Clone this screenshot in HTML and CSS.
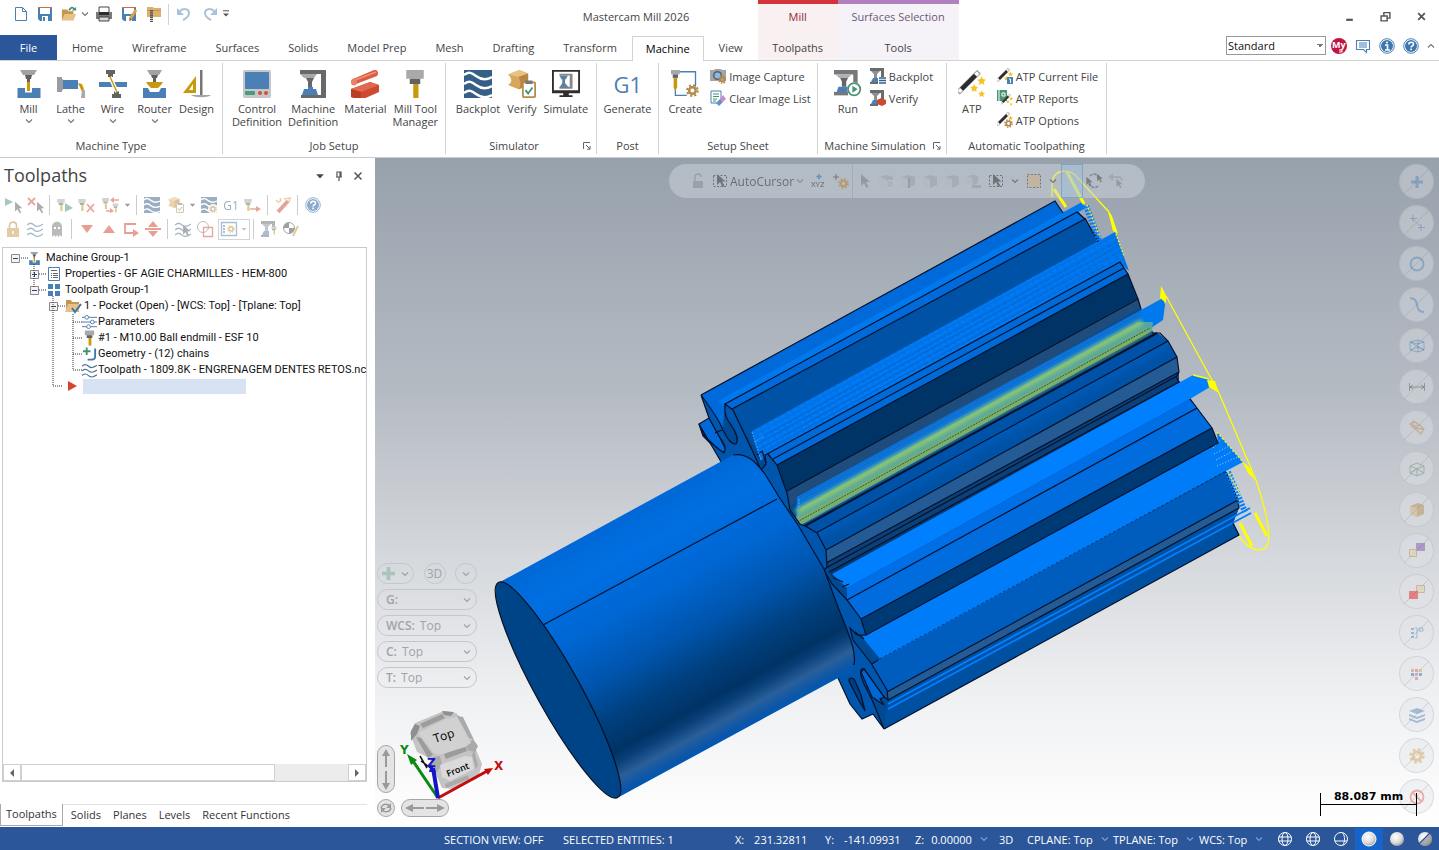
FILE: index.html
```html
<!DOCTYPE html>
<html lang="en">
<head>
    <meta charset="utf-8">
    <title>Mastercam Mill 2026</title>
    <link rel="stylesheet" href="styles.css">
</head>
<body>

<!-- shared icons -->
<svg class="sprite" aria-hidden="true">
    <symbol id="chev" viewBox="0 0 8 8"><path d="M1 2.500l3 3 3-3" fill="none" stroke="currentColor" stroke-width="1.200"/></symbol>
    <symbol id="tri" viewBox="0 0 8 8"><path d="M1 2.500h6L4 6z" fill="currentColor"/></symbol>
    <symbol id="cursor" viewBox="0 0 16 16"><path d="M5 1v12l3-3 2.500 5 2-1-2.500-5h4z" fill="#5c5c5c"/></symbol>
    <symbol id="cursor-box" viewBox="0 0 16 16"><path d="M1.500 2.500h13v11h-13z" fill="none" stroke="#4d4d4d" stroke-dasharray="2 1.500"/><path d="M5 1v11l3-3 2.500 5 2-1-2.500-4.500h3.500z" fill="#4d4d4d"/></symbol>
    <symbol id="tool" viewBox="0 0 16 16"><path d="M3 0h10v5H3z" fill="#a9a9ab"/><path d="M5 5h6v3H5z" fill="#626262"/><path d="M7 8h3v8H7z" fill="#c59a10"/></symbol>
    <symbol id="mill" viewBox="0 0 28 28"><path d="M5 0h17l-3 5H8z" fill="#a2a2a4"/><path d="M10 5h7l-1 4h-1v4h-3V9h-1z" fill="#606060"/><path d="M2.500 18H10v4.500h7V18h8.500v10h-23z" fill="#4a80b5"/><path d="M12 12h3v9h-3z" fill="#c9990c"/></symbol>
    <symbol id="lathe" viewBox="0 0 28 28"><path d="M0 7h5v2h1v11H5v2H0z" fill="#9c9ca0"/><path d="M6 10h15v9H6z" fill="#4a80b5"/><path d="M21 13l4 1 2 5-2 3z" fill="#c9990c"/><path d="M25 20h3v8h-4z" fill="#a9a9ab"/></symbol>
    <symbol id="wire" viewBox="0 0 28 28"><path d="M7 0h9v4h-2v3H9V4H7zM13 28v-4h2v-3h5v3h2v4z" fill="#626262"/><path d="M0 12h28v5H0z" fill="#4a80b5"/><path d="M11 7l7 15" stroke="#fff" stroke-width="4"/><path d="M11 7l7 15" stroke="#c9990c" stroke-width="1.500"/></symbol>
    <symbol id="router" viewBox="0 0 28 28"><path d="M6 0h15l-3 5H9z" fill="#a2a2a4"/><path d="M10 5h7l-1 3h-1v4h-3V8h-1z" fill="#606060"/><path d="M5 12h17l-2 3-3 3h-7l-3-3z" fill="#c9990c"/><path d="M2 18h5l2 4h9l2-4h5v10H2z" fill="#4a80b5"/></symbol>
    <symbol id="design" viewBox="0 0 28 28"><path d="M0 23L13 6v17zm6-3h4v-6z" fill="#c9990c" fill-rule="evenodd"/><path d="M17 0h2.500v25H17z" fill="#777"/><path d="M8 25h20c-3 3-16 3-20 0z" fill="#a2a5a8"/></symbol>
    <symbol id="control" viewBox="0 0 28 28"><rect width="28" height="28" rx="2" fill="#c6c7ca"/><rect x="2" y="2" width="24" height="17" rx="1" fill="#4a80b5"/><rect x="2" y="21" width="10" height="4" rx="1" fill="#4a9b7d"/><circle cx="17" cy="23" r="2" fill="#d2503a"/><circle cx="23" cy="23" r="2" fill="#d2503a"/></symbol>
    <symbol id="machine" viewBox="0 0 28 28"><path d="M1 0h26v29H2v-4h20V4H1z" fill="#69696b"/><path d="M1 4h17l-3 4H5z" fill="#aaaaac"/><path d="M7 8h8l-2 4v5H9v-5z" fill="#666"/><path d="M5 19h4v-2h5v2h3l2 6H3z" fill="#4a80b5"/></symbol>
    <symbol id="material" viewBox="0 0 28 28"><path d="M2 9L23 0c4-1 5 4 3 6L5 14c-5 2-6-3-3-5z" fill="#d85e43"/><path d="M4 10l21-8" stroke="#f19479" stroke-width="1.500"/><ellipse cx="3" cy="12" rx="3" ry="3.500" fill="#e8816a"/><path d="M0 19l19-7 9 3v7L10 30l-10-3z" fill="#cc4a30"/><path d="M0 19l19-7 9 3-18 7z" fill="#e2694d"/><path d="M0 19l10 3v8L0 27z" fill="#b93e26"/></symbol>
    <symbol id="waves" viewBox="0 0 28 28"><path d="M0 0h28v28H0z" fill="#365f87"/><path d="M0 5c5-4 8-2 12 1s9 5 16 1M0 14c5-4 8-2 12 1s9 5 16 1M0 23c5-4 8-2 12 1s9 5 16 1" fill="none" stroke="#fff" stroke-width="2.500"/></symbol>
    <symbol id="verify" viewBox="0 0 32 32"><path d="M0 5l13-5 10 4v14l-11 4L0 17c5-3 5-7 0-12z" fill="#d9a75c"/><path d="M0 5l13-5 10 4-11 4z" fill="#e9c182"/><path d="M12 8l11-4v14l-11 4c3-4 3-9 0-14z" fill="#b98545"/><rect x="17" y="14" width="14" height="17" rx="1" fill="#fff" stroke="#b58a49" stroke-width="2"/><path d="M20 12h8v4h-8z" fill="#777"/><path d="M20 23l3 4 5-7" fill="none" stroke="#3f9373" stroke-width="2"/></symbol>
    <symbol id="simulate" viewBox="0 0 30 30"><path d="M1 1h28v22H1z" fill="#fff" stroke="#2f2d30" stroke-width="2"/><path d="M0 22h30v3H0zM12 25h6v2h4v2H8v-2h4z" fill="#2f2d30"/><path d="M8 4h14v16H8v-2h11V6H8z" fill="#888"/><path d="M8 6h9l-2 4h-1v4l4 5H8l3-5v-4h-1z" fill="#60809f"/></symbol>
    <symbol id="gear" viewBox="0 0 16 16"><circle cx="8" cy="8" r="4" fill="none" stroke="currentColor" stroke-width="3"/><circle cx="8" cy="8" r="6.500" fill="none" stroke="currentColor" stroke-width="2.500" stroke-dasharray="2.700 2.400"/></symbol>
    <symbol id="create" viewBox="0 0 32 32"><path d="M6 2h22v17M5 20v9h13" fill="none" stroke="#4a80b5" stroke-width="1.500"/><path d="M0 0h10v5H0z" fill="#a9a9ab"/><path d="M2 5h6v4H2z" fill="#626262"/><path d="M3 9h4v11l-2 4-2-4z" fill="#c9990c"/><use href="#gear" x="17" y="16" width="15" height="15" color="#b58a49"/></symbol>
    <symbol id="camera" viewBox="0 0 16 16"><path d="M0 2h4l1-1h6l1 1h4v11H0z" fill="#a3a5a9"/><circle cx="7.500" cy="7.500" r="4.500" fill="#5c5e61"/><circle cx="7.500" cy="7.500" r="3" fill="#8bbbe5"/><use href="#gear" x="8" y="7" width="9" height="9" color="#b58a49"/></symbol>
    <symbol id="clear-list" viewBox="0 0 16 16"><path d="M1 1h10v12H1z" fill="#fff" stroke="#4a80b5"/><path d="M3 4h6M3 6.500h6M3 9h4M3 11h3" stroke="#3f9373"/><path d="M6 13l3 3 4-4-3-3z" fill="#5e93cb"/><path d="M10 9l3 3 3-3-3-4z" fill="#cf88cc"/></symbol>
    <symbol id="run" viewBox="0 0 32 32"><path d="M0 0h27v15h-5V5H0z" fill="#77787b"/><path d="M0 29v-4h16v4z" fill="#77787b"/><path d="M2 5h18l-4 4H6z" fill="#aeb0b3"/><path d="M7 9h9l-2 4v6H9v-6z" fill="#666"/><path d="M5 19h12v6H3z" fill="#4a80b5"/><circle cx="23" cy="22" r="8" fill="#fff"/><circle cx="23" cy="22" r="7" fill="none" stroke="#4b9276" stroke-width="2"/><path d="M21 18l6 4-6 4z" fill="#4b9276"/></symbol>
    <symbol id="mini-machine" viewBox="0 0 16 16"><path d="M0 0h14v9h-3V3H0zM0 16v-2h8v2z" fill="#6a6b6d"/><path d="M1 3h9L7 6v4H4V6z" fill="#8d8f93"/><path d="M3 10h5v4H1z" fill="#4a80b5"/></symbol>
    <symbol id="star" viewBox="0 0 10 10"><path d="M5 0l1.500 3.300L10 4 7.500 6.300 8 10 5 8.200 2 10l.5-3.700L0 4l3.500-.7z" fill="#f6c324"/></symbol>
    <symbol id="wand" viewBox="0 0 32 32"><path d="M0 26L24 2" stroke="#999" stroke-width="6"/><path d="M1 25L23 3" stroke="#fff" stroke-width="4"/><path d="M4 22L20 6" stroke="#2c2c2e" stroke-width="5"/><use href="#star" x="22" y="7" width="10" height="10"/><use href="#star" x="14" y="16" width="9" height="9"/><use href="#star" x="23" y="23" width="8" height="8"/></symbol>
    <symbol id="stripes" viewBox="0 0 16 16"><path d="M0 4c3-3 5-2 7 0s5 2 9-1M0 9c3-3 5-2 7 0s5 2 9-1M0 14c3-3 5-2 7 0s5 2 9-1" fill="none" stroke="#4f7598" stroke-width="1.200"/></symbol>
    <symbol id="box" viewBox="0 0 16 16"><path d="M1 4l8-2 6 2v8l-7 3-7-3z" fill="#909396"/><path d="M1 4l7 2v9l-7-3z" fill="#b4b7ba"/></symbol>
    <symbol id="minus-box" viewBox="0 0 9 9"><path d="M.5.5h8v8h-8z" fill="#f4f4f4" stroke="#8a8a8a"/><path d="M2 4.500h5" stroke="#26437c"/></symbol>
    <symbol id="plus-box" viewBox="0 0 9 9"><path d="M.5.5h8v8h-8z" fill="#f4f4f4" stroke="#8a8a8a"/><path d="M2 4.500h5M4.500 2v5" stroke="#26437c"/></symbol>
    <symbol id="help" viewBox="0 0 16 16"><circle cx="8" cy="8" r="7.300" fill="#fff" stroke="#4a80b5"/><circle cx="8" cy="8" r="6" fill="#3f76ae"/><path d="M5.800 6.500c0-3 4.700-3 4.700-.2 0 1.600-2.400 1.500-2.400 3.200M8.100 10.500v1.700" fill="none" stroke="#fff" stroke-width="1.600"/></symbol>
    <symbol id="launcher" viewBox="0 0 8 8"><path d="M.5 7V.5H7M3 3l4 4M7 4v3.200H4" fill="none" stroke="#666"/></symbol>
    <symbol id="globe" viewBox="0 0 16 16"><g fill="none" stroke="#fff"><circle cx="8" cy="8" r="6.500"/><ellipse cx="8" cy="8" rx="3" ry="6.500"/><path d="M1.500 6h13M1.500 10h13"/></g></symbol>
    <radialGradient id="pearl" cx=".4" cy=".35" r=".7"><stop offset="0" stop-color="#fff"/><stop offset=".6" stop-color="#dcdcdc"/><stop offset="1" stop-color="#999"/></radialGradient>
</svg>

<header class="header">
    <div class="titlebar">
        <div class="quick-access">
            <button title="New"><svg viewBox="0 0 16 16"><path d="M2.500 1.500h7l4 4v9h-11zM9.500 1.500v4h4" fill="#fff" stroke="#4a80b5"/></svg></button>
            <button title="Save"><svg viewBox="0 0 16 16"><path d="M1 1h14v14H3l-2-2z" fill="#4a80b5"/><path d="M3 1h10v7H3z" fill="#fff"/><path d="M1 1h14v1H1z" fill="#cf6a4f"/><path d="M5 10h6v5H5z" fill="#fff"/><path d="M6 11h2v4H6z" fill="#4a80b5"/></svg></button>
            <button title="Open"><svg viewBox="0 0 18 16"><path d="M1 3h6l1 2h6v10H1z" fill="#c59552"/><path d="M4 8h13l-3 7H1z" fill="#e8c187"/><path d="M9 4c2-4 5-4 6-1" fill="none" stroke="#3f9373" stroke-width="2"/><path d="M12 4h5V0z" fill="#3f9373"/></svg></button>
            <svg class="caret"><use href="#chev"/></svg>
            <button title="Print" class="wide"><svg viewBox="0 0 16 16"><path d="M3 1h10v6H3z" fill="#fff" stroke="#444"/><path d="M0 6h3v3h10V6h3v7H0z" fill="#77797c"/><path d="M3 6h10v3H3z" fill="#2d2d2f"/><path d="M3 11h10v4H3z" fill="#d5d7da" stroke="#444"/></svg></button>
            <button title="Save as"><svg viewBox="0 0 16 16"><path d="M0 1h14v14H2l-2-2z" fill="#4a80b5"/><path d="M2 2h10v6H2z" fill="#fff"/><path d="M0 1h14v1H0z" fill="#cf6a4f"/><path d="M4 10h6v5H4z" fill="#fff"/><path d="M8 13l6-9" stroke="#e0a33a" stroke-width="3"/><path d="M7 15l1-3 2 2z" fill="#5a5a5a"/></svg></button>
            <button title="Zip2Go"><svg viewBox="0 0 16 16"><path d="M1 1h6l1 1h7v9H1z" fill="#dcb06d"/><path d="M1 4h14v1H1z" fill="#c59552"/><path d="M5.500 4v12" stroke="#555" stroke-width="3" stroke-dasharray="1.500 .7"/></svg></button>
            <span class="qa-sep"></span>
            <button title="Undo" class="wide"><svg viewBox="0 0 16 16"><path d="M3 6c4-5 10-3 10 1 0 3-2 5-6 7" fill="none" stroke="#aac3da" stroke-width="2"/><path d="M1 2v7h7z" fill="#aac3da"/></svg></button>
            <button title="Redo"><svg viewBox="0 0 16 16"><path d="M13 6C9 1 3 3 3 7c0 3 2 5 6 7" fill="none" stroke="#aac3da" stroke-width="2"/><path d="M15 2v7H8z" fill="#aac3da"/></svg></button>
            <svg class="caret more" viewBox="0 0 8 8"><path d="M1 .8h6" stroke="#555"/><path d="M1 3.500h6L4 6.500z" fill="#555"/></svg>
        </div>
        <h1 class="app-title">Mastercam Mill 2026</h1>
        <div class="window-buttons">
            <button title="Minimize"><svg viewBox="0 0 10 10"><path d="M2 8h6" stroke="#555" stroke-width="2"/></svg></button>
            <button title="Restore"><svg viewBox="0 0 10 10"><path d="M1 4.500h5.500V9H1zM3.500 4V1.500H9V6.500H7" fill="none" stroke="#555" stroke-width="1.300"/></svg></button>
            <button title="Close"><svg viewBox="0 0 10 10"><path d="M2 2l6 6M8 2L2 8" stroke="#555" stroke-width="1.600"/></svg></button>
        </div>
    </div>
    <nav class="tabs">
        <a href="#" class="tab file">File</a>
        <a href="#" class="tab">Home</a>
        <a href="#" class="tab">Wireframe</a>
        <a href="#" class="tab">Surfaces</a>
        <a href="#" class="tab">Solids</a>
        <a href="#" class="tab">Model Prep</a>
        <a href="#" class="tab">Mesh</a>
        <a href="#" class="tab">Drafting</a>
        <a href="#" class="tab">Transform</a>
        <a href="#" class="tab active">Machine</a>
        <a href="#" class="tab">View</a>
        <a href="#" class="context mill"><span>Mill</span><span>Toolpaths</span></a>
        <a href="#" class="context surf"><span>Surfaces Selection</span><span>Tools</span></a>
        <div class="tab-tools">
            <select class="style-select" aria-label="Line style"><option>Standard</option></select>
            <button title="My Mastercam"><svg viewBox="0 0 16 16"><circle cx="8" cy="8" r="8" fill="#bd1740"/><text x="1" y="10" class="my">My</text><path d="M8 12h3v2H8" stroke="#fff" fill="none"/></svg></button>
            <button title="Feedback"><svg viewBox="0 0 16 16"><path d="M1.500 2.500h13v9h-3v3l-3-3h-7zM4 5h8M4 7h8M4 9h8" fill="#fff" stroke="#4a80b5" stroke-width="1.100"/></svg></button>
            <button title="About"><svg viewBox="0 0 16 16"><circle cx="8" cy="8" r="7.300" fill="#fff" stroke="#4a80b5"/><circle cx="8" cy="8" r="6" fill="#3f76ae"/><path d="M6 7h2.500v5M6 12h5M7 4.500h2" fill="none" stroke="#fff" stroke-width="1.600"/></svg></button>
            <button title="Help"><svg><use href="#help"/></svg></button>
            <svg class="caret up"><use href="#chev"/></svg>
        </div>
    </nav>
</header>

<section class="ribbon">
    <div class="group g-type">
        <div class="items">
            <button class="big"><svg><use href="#mill"/></svg>Mill<svg class="caret"><use href="#chev"/></svg></button>
            <button class="big"><svg><use href="#lathe"/></svg>Lathe<svg class="caret"><use href="#chev"/></svg></button>
            <button class="big"><svg><use href="#wire"/></svg>Wire<svg class="caret"><use href="#chev"/></svg></button>
            <button class="big"><svg><use href="#router"/></svg>Router<svg class="caret"><use href="#chev"/></svg></button>
            <button class="big"><svg><use href="#design"/></svg>Design</button>
        </div>
        <div class="group-label">Machine Type</div>
    </div>
    <div class="group g-setup">
        <div class="items">
            <button class="big"><svg><use href="#control"/></svg>Control<br>Definition</button>
            <button class="big"><svg><use href="#machine"/></svg>Machine<br>Definition</button>
            <button class="big"><svg><use href="#material"/></svg>Material</button>
            <button class="big"><svg><use href="#tool"/></svg>Mill Tool<br>Manager</button>
        </div>
        <div class="group-label">Job Setup</div>
    </div>
    <div class="group g-sim">
        <div class="items">
            <button class="big"><svg><use href="#waves"/></svg>Backplot</button>
            <button class="big"><svg><use href="#verify"/></svg>Verify</button>
            <button class="big"><svg><use href="#simulate"/></svg>Simulate</button>
        </div>
        <div class="group-label">Simulator<svg class="launcher"><use href="#launcher"/></svg></div>
    </div>
    <div class="group g-post">
        <div class="items">
            <button class="big"><span class="g1">G1</span>Generate</button>
        </div>
        <div class="group-label">Post</div>
    </div>
    <div class="group g-sheet">
        <div class="items">
            <button class="big"><svg><use href="#create"/></svg>Create</button>
            <div class="stack">
                <button class="small"><svg><use href="#camera"/></svg>Image Capture</button>
                <button class="small"><svg><use href="#clear-list"/></svg>Clear Image List</button>
            </div>
        </div>
        <div class="group-label">Setup Sheet</div>
    </div>
    <div class="group g-msim">
        <div class="items">
            <button class="big"><svg><use href="#run"/></svg>Run</button>
            <div class="stack">
                <button class="small"><svg viewBox="0 0 16 16"><use href="#mini-machine"/><path d="M8 9h8v7H8z" fill="#fff"/><path d="M9 10h7M9 12.500h7M9 15h7" stroke="#365f87" stroke-width="1.300"/></svg>Backplot</button>
                <button class="small"><svg viewBox="0 0 16 16"><use href="#mini-machine"/><path d="M7 10l4-2 5 2v4l-4 2-5-2z" fill="#c84a30"/></svg>Verify</button>
            </div>
        </div>
        <div class="group-label">Machine Simulation<svg class="launcher"><use href="#launcher"/></svg></div>
    </div>
    <div class="group g-atp">
        <div class="items">
            <button class="big"><svg><use href="#wand"/></svg>ATP</button>
            <div class="stack">
                <button class="small"><svg viewBox="0 0 16 16"><use href="#wand"/><path d="M10 9h6v7h-6z" fill="#4a80b5"/><path d="M12 11h1.500v4" fill="none" stroke="#fff"/></svg>ATP Current File</button>
                <button class="small"><svg viewBox="0 0 16 16"><path d="M0 0h10v11H0z" fill="#4b9276"/><path d="M2 0v11M5 3h3v3H5z" fill="none" stroke="#fff"/><use href="#wand" x="4" y="4" width="12" height="12"/></svg>ATP Reports</button>
                <button class="small"><svg viewBox="0 0 16 16"><use href="#wand"/><circle cx="12" cy="12" r="5" fill="#fff"/><use href="#gear" x="7" y="7" width="9" height="9" color="#b58a49"/></svg>ATP Options</button>
            </div>
        </div>
        <div class="group-label">Automatic Toolpathing</div>
    </div>
</section>

<main class="workspace">
    <aside class="panel">
        <div class="panel-head">
            <h2>Toolpaths</h2>
            <button title="Menu"><svg><use href="#tri"/></svg></button>
            <button title="Pin"><svg viewBox="0 0 10 10"><path d="M2 6h6M3 6V1h4v5M6 1v5M5 6v4" fill="none" stroke="#555" stroke-width="1.200"/></svg></button>
            <button title="Close"><svg viewBox="0 0 10 10"><path d="M1.500 1.500l7 7M8.500 1.500l-7 7" stroke="#555" stroke-width="1.500"/></svg></button>
        </div>
        <div class="toolrow">
            <button title="Select all"><svg viewBox="0 0 16 16"><path d="M0 1l8 4-8 4z" fill="#4b9276"/><use href="#cursor" x="6" y="4" width="13" height="13"/></svg></button>
            <button title="Unselect all"><svg viewBox="0 0 16 16"><path d="M1 1l7 7M8 1L1 8" stroke="#d2503a" stroke-width="1.800"/><use href="#cursor" x="6" y="4" width="13" height="13"/></svg></button>
            <i></i>
            <button title="Regenerate selected"><svg viewBox="0 0 16 16"><use href="#tool" x="-2" y="1" width="12" height="14"/><path d="M8 6l8 5-8 4z" fill="#4b9276"/></svg></button>
            <button title="Regenerate dirty"><svg viewBox="0 0 16 16"><use href="#tool" x="-3" y="1" width="12" height="14"/><path d="M8 7l7 8M15 7l-7 8" stroke="#d2503a" stroke-width="1.800"/></svg></button>
            <button title="Transform" class="ml"><svg viewBox="0 0 16 16"><use href="#tool" x="-3" y="1" width="11" height="11"/><use href="#tool" x="8" y="6" width="9" height="10"/><path d="M8 3h8M3 14h7" stroke="#d2503a" stroke-width="1.500"/><path d="M7 3l4-3v6zM11 14l-4-3v5z" fill="#d2503a"/></svg></button>
            <svg class="caret"><use href="#tri"/></svg>
            <i></i>
            <button title="Backplot"><svg><use href="#waves"/></svg></button>
            <button title="Verify" class="ml"><svg><use href="#verify"/></svg></button>
            <svg class="caret"><use href="#tri"/></svg>
            <button title="Simulator options"><svg viewBox="0 0 16 16"><use href="#waves"/><circle cx="12" cy="12" r="5" fill="#fff"/><use href="#gear" x="8" y="8" width="8" height="8" color="#b58a49"/></svg></button>
            <button title="Post" class="g1-small">G1</button>
            <button title="High feed"><svg viewBox="0 0 16 16"><use href="#tool" x="-3" y="1" width="12" height="14"/><path d="M5 12h8" stroke="#d2503a" stroke-width="1.500"/><path d="M11 9l5 3-5 3z" fill="#d2503a"/></svg></button>
            <i></i>
            <button title="Delete"><svg viewBox="0 0 16 16"><path d="M3 15L13 4" stroke="#cc4a30" stroke-width="4"/><path d="M1 3l2 2 3-1M5 1l1 3M9 2l6-1-1 4" fill="none" stroke="#d9a53a" stroke-width="1.500"/></svg></button>
            <i></i>
            <button title="Help" class="strong"><svg><use href="#help"/></svg></button>
        </div>
        <div class="toolrow">
            <button title="Lock"><svg viewBox="0 0 16 16"><path d="M4.500 8V4.500C4.500 0 11.500 0 11.500 4.500V8" fill="none" stroke="#b88b45" stroke-width="1.600"/><path d="M2 7h12v9H2z" fill="#c89b4e"/><path d="M8 10v3" stroke="#fff" stroke-width="1.500"/></svg></button>
            <button title="Toggle display"><svg><use href="#stripes"/></svg></button>
            <button title="Ghost"><svg viewBox="0 0 16 16"><path d="M3 16V6c0-7 10-7 10 0v10l-2-2-1.500 2L8 14l-1.500 2L5 14z" fill="#77797c"/><path d="M5 6h2v2H5zM9 6h2v2H9z" fill="#fff"/></svg></button>
            <i></i>
            <button title="Move down"><svg viewBox="0 0 16 16"><path d="M2 4h12l-6 8z" fill="#d2402a"/></svg></button>
            <button title="Move up"><svg viewBox="0 0 16 16"><path d="M2 12h12L8 4z" fill="#d2402a"/></svg></button>
            <button title="Insert arrow"><svg viewBox="0 0 16 16"><path d="M13 3H2v9h9" fill="none" stroke="#d2402a" stroke-width="1.800"/><path d="M10 8l6 4-6 4z" fill="#d2402a"/></svg></button>
            <button title="Scroll to arrow"><svg viewBox="0 0 16 16"><path d="M3 6l5-6 5 6zM3 10l5 6 5-6zM0 7h16v2H0z" fill="#d2402a"/></svg></button>
            <i></i>
            <button title="Single display"><svg viewBox="0 0 16 16"><use href="#stripes"/><use href="#cursor" x="4" y="3" width="13" height="13"/></svg></button>
            <button title="Boundary"><svg viewBox="0 0 16 16"><circle cx="6" cy="6" r="5.500" fill="none" stroke="#77797c"/><path d="M6.500 6.500h9v9h-9z" fill="none" stroke="#d2503a" stroke-width="1.300"/></svg></button>
            <button title="Display options" class="boxed"><svg viewBox="0 0 16 16"><path d="M.5 1.500h15v13H.5z" fill="#fff" stroke="#4a80b5" stroke-width="1.300"/><path d="M3 4v8" stroke="#4a80b5" stroke-width="2" stroke-dasharray="2 1"/><use href="#gear" x="6" y="4" width="8" height="8" color="#c8952a"/></svg><svg class="caret"><use href="#tri"/></svg></button>
            <i></i>
            <button title="Machine"><svg viewBox="0 0 16 16"><use href="#mini-machine"/><use href="#tool" x="9" y="4" width="8" height="11"/></svg></button>
            <button title="Edit"><svg viewBox="0 0 16 16"><circle cx="6" cy="7" r="5.500" fill="#fff" stroke="#444"/><path d="M6 1.500V7H.5A6 6 0 0 1 6 1.500zM6 7h5.500A6 6 0 0 1 6 12.500z" fill="#444"/><path d="M10 15l5-10" stroke="#c8952a" stroke-width="2"/></svg></button>
        </div>

        <div class="tree">
            <ul>
                <li class="l0"><svg class="exp"><use href="#minus-box"/></svg><svg class="ico"><use href="#mill"/></svg>Machine Group-1</li>
                <li class="l1"><svg class="exp"><use href="#plus-box"/></svg><svg class="ico" viewBox="0 0 16 16"><path d="M2.500 1.500h11v13h-11z" fill="#fff" stroke="#4a80b5"/><path d="M5 4.500h6M5 7.500h1M7 7.500h5M5 9.500h1M7 9.500h5M5 11.500h1M7 11.500h5" stroke="#666"/></svg>Properties - GF AGIE CHARMILLES - HEM-800</li>
                <li class="l1"><svg class="exp"><use href="#minus-box"/></svg><svg class="ico" viewBox="0 0 16 16"><path d="M2 2h5v5H2zM9 2h5v5H9zM2 9h5v5H2zM9 9h5v5H9z" fill="#4a80b5"/></svg>Toolpath Group-1</li>
                <li class="l2"><svg class="exp"><use href="#minus-box"/></svg><svg class="ico" viewBox="0 0 16 16"><path d="M1 2h5l1 2h7v10H1z" fill="#c59552"/><path d="M3 6h13l-3 8H0z" fill="#e8c187"/><path d="M7 10l3 4 6-8" fill="none" stroke="#3f76ae" stroke-width="2"/></svg>1 - Pocket (Open) - [WCS: Top] - [Tplane: Top]</li>
                <li class="l3"><svg class="ico" viewBox="0 0 16 16"><path d="M0 3h16M0 8h16M0 13h16" stroke="#4f7598"/><g fill="#fff" stroke="#4a80b5"><circle cx="5" cy="3" r="2"/><circle cx="11" cy="8" r="2"/><circle cx="7" cy="13" r="2"/></g></svg>Parameters</li>
                <li class="l3"><svg class="ico"><use href="#tool"/></svg>#1 - M10.00 Ball endmill - ESF 10</li>
                <li class="l3"><svg class="ico" viewBox="0 0 16 16"><path d="M5 1v8M1 5h8" stroke="#3f9373" stroke-width="2"/><path d="M14 2v9c0 3-2 3-8 3" fill="none" stroke="#3f76ae" stroke-width="2"/></svg>Geometry - (12) chains</li>
                <li class="l3"><svg class="ico"><use href="#stripes"/></svg>Toolpath - 1809.8K - ENGRENAGEM DENTES RETOS.nc</li>
                <li class="insert"><svg class="ico" viewBox="0 0 16 16"><path d="M4 3l9 5-9 5z" fill="#d2452e"/></svg><span></span></li>
            </ul>
            <!-- dotted branch lines -->
            <svg class="branches" viewBox="0 0 120 144"><path d="M18 8h8M31 14v24M36 24h8M36 40h8M50 46v90h10M55 56h8M70 64v56h10M70 72h10M70 88h10M70 104h10" fill="none" stroke="#333" stroke-dasharray="1 1"/></svg>
            <div class="hscroll"><button title="Left"><svg viewBox="0 0 8 8"><path d="M6 0v8L2 4z" fill="#666"/></svg></button><span class="thumb"></span><button title="Right"><svg viewBox="0 0 8 8"><path d="M2 0v8l4-4z" fill="#666"/></svg></button></div>
        </div>
        <nav class="bottom-tabs">
            <a href="#" class="on">Toolpaths</a><a href="#">Solids</a><a href="#">Planes</a><a href="#">Levels</a><a href="#">Recent Functions</a>
        </nav>
    </aside>

    <section class="viewport">
        <svg class="model" viewBox="375 158 1064 669">
            <defs>
                <linearGradient id="shaft" gradientUnits="userSpaceOnUse" x1="500" y1="582" x2="618" y2="798">
                    <stop offset="0" stop-color="#0068d6"/><stop offset=".15" stop-color="#006fe2"/><stop offset=".35" stop-color="#0066d2"/><stop offset=".55" stop-color="#0054ac"/><stop offset=".7" stop-color="#00407f"/><stop offset=".83" stop-color="#003365"/><stop offset=".87" stop-color="#083f78"/><stop offset=".93" stop-color="#2a5f9a"/><stop offset=".98" stop-color="#0a56a8"/><stop offset="1" stop-color="#0058b4"/>
                </linearGradient>
                <linearGradient id="flank" gradientUnits="userSpaceOnUse" x1="980" y1="428" x2="992" y2="450"><stop offset="0" stop-color="#0066d0"/><stop offset="1" stop-color="#0052a6"/></linearGradient>
                <pattern id="hatch" width="7" height="5" patternUnits="userSpaceOnUse" patternTransform="rotate(-29)"><path d="M0 1h7M2 3h3" stroke="#0058b8" stroke-width=".5"/></pattern>
                <filter id="soft" x="-10%" y="-10%" width="120%" height="120%"><feGaussianBlur stdDeviation="2"/></filter>
            </defs>
            <!-- gear body -->
            <path d="M701 395L1055 201 1062 212 1078 211 1128 274 1140 306 1153 332 1168 341 1179 381 1197 408 1218 443 1226 472 1239 508 1233 523 1239 535 884 729 873 714 862 719 838 678 730 455 709 418z" fill="#004a94"/>
            <path d="M701 395L1055 201l8 13L725 404l-2 24z" fill="#006adb"/>
            <path d="M718 401L1082 202l4 6L724 406z" fill="#0078ee"/>
            <path d="M725 404L1077 212l8 7L732 409z" fill="#006adb"/>
            <path d="M732 409L1085 218l14 24L757 452z" fill="#0052a6"/>
            <path d="M752 431L1115 232l14 39-10-8L767 455l-6 6z" fill="#007bf5"/>
            <path d="M752 431L1115 232l14 39-10-8L767 455l-6 6z" fill="url(#hatch)"/>
            <path d="M756 440L1117 242M757 444L1118 247M759 449L1120 252M760 453L1122 257" stroke="#0062cc" stroke-width=".7"/>
            <path d="M767 454L1120 262l8 12L777 465z" fill="#006ad8"/>
            <path d="M777 465L1128 274l10 25L787 491z" fill="#003467"/>
            <path d="M787 491L1138 298l3 10L790 506z" fill="#1d4c7d"/>
            <path d="M797 497L1163 298l2 7-2 15L1148 330 796 523z" fill="#0078ee"/>
            <path d="M799 498L1140 311M799 501L1140 314M799 504L1140 317" stroke="#2a5f96" stroke-width=".8"/>
            <path d="M793 522L802 507 1139 322 1153 322 1152 331 801 525z" fill="#52a5a7"/>
            <g fill="none" filter="url(#soft)"><path d="M796 512L1142 322" stroke="#96ca66" stroke-width="5"/><path d="M794 524L1150 330" stroke="#9ab83c" stroke-width="4"/></g>
            <path d="M797 522L1150 328" stroke="#263c2b" stroke-width=".8" stroke-dasharray="2 1"/>
            <path d="M802 527L1158 333l10 8L816 534z" fill="#0052a8"/>
            <path d="M816 533L1168 341l9 16L826 550z" fill="url(#flank)"/>
            <path d="M826 550L1177 357l2 15L826 563z" fill="#245b94"/>
            <path d="M826 563L1179 372v9L829 572z" fill="#0b4078"/>
            <path d="M829 572L1179 381l10 6L834 580z" fill="#00386f"/>
            <path d="M832 574L1193 375l15 4 2 8-20 12L847 588z" fill="#007fff"/>
            <path d="M847 588L1190 399l7 9L847 600z" fill="#006fe6"/>
            <path d="M847 600L1197 408l15 20L861 619z" fill="#006cde"/>
            <path d="M861 619L1212 428l6 15L866 635z" fill="#003a74"/>
            <path d="M862 637L1218 443l-1-11 26 30-15 8L881 660z" fill="#007cf8"/>
            <path d="M1213 448L1222 438M1214 454L1229 446M1216 460L1235 450M1217 466L1240 456" stroke="#a9cdf0" stroke-width="1" stroke-dasharray="1 2"/>
            <path d="M881 659L1226 472l12 28L887 692 870 665z" fill="#005dbe"/>
            <path d="M887 692L1238 500l1 8L888 700z" fill="#245b94"/>
            <path d="M888 700L1239 508l-6 15 6 12L884 729z" fill="#0050a2"/>
            <path d="M888 704L1250 508M888 709L1251 513" stroke="#007fff" stroke-width="1.800"/>
            <g class="edges">
                <path d="M701 395L1055 201l8 12M725 404L1077 212l8 7L732 409M1085 218l13 24M767 454L1120 262l8 12L777 465M773 459L1124 268M1128 274l10 25L787 491M1138 299l3 10"/>
                <path d="M1152 333h8l8 8L816 533M1168 341l9 16L826 550M1177 357l2 15-3 5 3 5L829 572M1177 376L826 568M1179 372L826 563M1190 399l7 9L847 600M1197 408l15 20L861 619M1212 428l6 15L866 635"/>
                <path d="M1226 472l12 28L887 692M1238 500l1 8L888 700M1233 523l6 12L884 729"/>
                <path d="M803 527L1157 333" stroke-width="2"/>
                <path d="M880 659L1226 471" stroke-width=".6" stroke-dasharray="3 2"/>
            </g>
            <!-- gear front face -->
            <g class="face">
                <path d="M699 424L709 418 718 434 726 450 722 453 712 445 703 436z" fill="#006adb"/>
                <path d="M699 424L703 434C711 443 718 449 724 453 727 448 724 443 719 436L709 418 701 395C710 407 719 420 723 430 728 440 731 444 736 444 740 438 734 429 729 422 724 415 725 411 725 404L733 410 753 452 761 470 766 464 765 455 768 454 777 465 787 493 790 510 800 524 807 527 817 533 826 550 827 567 824 570 832 584 847 600 861 619 866 635 857 635 850 628 853 640 871 663 887 690 888 700 884 697 864 669C858 668 861 677 864 684L873 702 884 729 873 714 862 719 850 704 838 678 720 460z"/>
                <path d="M715 433l7-3M766 463l-4-12-5 4" fill="none"/>
                <path d="M849 681c0-4 4-4 6 0l6 14 4 16-8-14z" fill="#003f80"/>
                <path d="M861 672l3-3 20 28-4 2 4 6-12-8z" fill="#0066d4"/>
            </g>
            <path d="M834 578l9 4M842 587l7-3M855 632l9 7M872 664l6-4" class="edges"/>
            <!-- shaft -->
            <path d="M500 582L733 455C748 452 757 464 765 474L779 497 798 525 824 569 838 607C846 628 857 650 854 665 852 675 844 674 838 678L619 797z" fill="url(#shaft)"/>
            <path d="M733 455C748 452 757 464 765 474L779 497 798 525 824 569 838 607C846 628 857 650 854 665M543 625L777 499" class="edges"/>
            <ellipse cx="558" cy="690" rx="123" ry="22" transform="rotate(61 558 690)" fill="#004488" stroke="#0a1022" stroke-width="1.200"/>
            <!-- toolpath ends -->
            <path d="M1086 206l13 34" stroke="#007fff" stroke-width="6" stroke-dasharray="2 1.500"/>
            <path d="M1228 472l17 40" stroke="#007fff" stroke-width="6" stroke-dasharray="2 1.500"/>
            <path d="M752 432l9 28M754 442l10-6M799 499v10" stroke="#4aa3ff" stroke-dasharray="2 1" fill="none"/>
            <!-- rapid moves -->
            <g fill="none" stroke="#ff0" stroke-width="1.300">
                <path d="M1052 197V184C1053 168 1070 168 1078 178L1108 211M1166 296L1219 393 1256 480C1266 510 1272 536 1267 546 1259 555 1248 548 1239 536M1193 375l16 4"/>
                <path d="M1054 189l12 18M1067 172l17 32" stroke-width="3"/>
                <path d="M1240 523l12 23M1255 513l12 23" stroke-width="3"/>
                <path d="M1087 205l13 32M1116 234l8 22M1228 472l13 24" stroke-dasharray="1.500 2"/>
                <path d="M1217 432l26 30" stroke-dasharray="2 2"/>
            </g>
            <path d="M1107 208l5 8 6 18-5-3zM1161 286l5 9v8l-6-5zM1207 380l8 1 4 12-10-6zM1242 461l8 7 5 12-7-7z" fill="#ff0"/>
        </svg>

        <div class="select-bar">
            <button title="Lock"><svg viewBox="0 0 16 16"><path d="M5 8V4c0-4 6-4 6 0" fill="none" stroke="#909396" stroke-width="1.500"/><path d="M3 8h10v7H3z" fill="#909396"/></svg></button>
            <button class="auto"><svg><use href="#cursor-box"/></svg>AutoCursor<svg class="caret"><use href="#chev"/></svg></button>
            <button title="Fast point"><svg viewBox="0 0 18 16"><path d="M9 0v6M6 3h6" stroke="#4a80b5" stroke-width="2"/><text x="0" y="15" class="xyz">XYZ</text></svg></button>
            <button title="Settings"><svg viewBox="0 0 16 16"><path d="M3 1v6M0 4h6" stroke="#555"/><use href="#gear" x="5" y="5" width="11" height="11" color="#b58a49"/></svg></button>
            <i></i>
            <button class="dim" title="Select"><svg><use href="#cursor"/></svg></button>
            <button class="dim" title="Solid selection"><svg viewBox="0 0 16 16"><use href="#box"/><circle cx="12" cy="11" r="4" fill="#a2a5a8" stroke="#ccc"/></svg></button>
            <button class="dim" title="Edge"><svg viewBox="0 0 16 16"><use href="#box"/><path d="M9 5v10" stroke="#666" stroke-width="2"/></svg></button>
            <button class="dim" title="Face"><svg><use href="#box"/></svg></button>
            <button class="dim" title="Body"><svg><use href="#box"/></svg></button>
            <button class="dim" title="From back"><svg viewBox="0 0 16 16"><use href="#box" width="13" height="13"/><path d="M6 12h9v3H6z" fill="#888"/></svg></button>
            <button title="Selection mode"><svg><use href="#cursor-box"/></svg></button>
            <svg class="caret"><use href="#chev"/></svg>
            <button title="Window"><svg viewBox="0 0 16 16"><path d="M1.500 1.500h13v13h-13z" fill="#c9b38e" stroke="#555" stroke-dasharray="2 1.500"/></svg></button>
            <svg class="caret"><use href="#chev"/></svg>
            <button class="picked" title="Verify selection"></button>
            <button title="Invert"><svg viewBox="0 0 16 16"><path d="M4 3c4-4 9-1 9 3M12 13c-3 3-8 1-9-2" fill="none" stroke="#4e6f8c" stroke-width="1.500" stroke-dasharray="3 1"/><use href="#cursor" x="-3" y="3" width="11" height="11"/><use href="#cursor" x="8" y="0" width="10" height="10"/></svg></button>
            <button class="dim" title="Last"><svg viewBox="0 0 16 16"><path d="M2 4h8c3 0 4 2 4 4" fill="none" stroke="#888" stroke-width="2"/><path d="M0 4l5-4v8z" fill="#888"/><use href="#cursor" x="5" y="5" width="11" height="11"/></svg></button>
        </div>

        <div class="masks">
            <button title="Points"><svg viewBox="0 0 16 16"><path d="M8 2v12M2 8h12" stroke="#4a80b5" stroke-width="3"/></svg></button>
            <button title="Lines"><svg viewBox="0 0 16 16"><path d="M4 0v7M1 3.500h7M12 9v7M9 12.500h7" stroke="#4a80b5"/><path d="M4 4l8 8" stroke="#888"/></svg></button>
            <button title="Arcs"><svg viewBox="0 0 16 16"><circle cx="8" cy="8" r="6.500" fill="none" stroke="#4a80b5" stroke-width="2"/></svg></button>
            <button title="Splines"><svg viewBox="0 0 16 16"><path d="M1 1c11 0 3 14 14 14" fill="none" stroke="#4a80b5" stroke-width="2"/></svg></button>
            <button title="Surfaces"><svg viewBox="0 0 16 16"><path d="M1 4l8-2 6 2v8l-6 2-8-2zM1 4l8 2 6-2M9 2v12M1 12l8-3 6 3M1 4l14 8" fill="none" stroke="#4a80b5"/></svg></button>
            <button title="Dimensions"><svg viewBox="0 0 16 16"><path d="M.5 4v8M15.500 4v8M1 8h14M4 6L1 8l3 2M12 6l3 2-3 2" fill="none" stroke="#555"/></svg></button>
            <button title="Wires"><svg viewBox="0 0 16 16"><path d="M1 4l4-3 10 8-3 5zM3 6l9-1M1 4l11 10M5 1l-2 6 9 2 3 0" fill="none" stroke="#b58a49" stroke-width="1.300"/></svg></button>
            <button title="Mesh"><svg viewBox="0 0 16 16"><path d="M1 5l7-3 7 3v7l-7 3-7-3z" fill="#d9cfae" stroke="#4b9276"/><path d="M1 5l7 3 7-3M8 8v7M1 12l7-4 7 4" fill="none" stroke="#4a80b5"/></svg></button>
            <button title="Solids"><svg viewBox="0 0 16 16"><path d="M1 4l8-3 6 2v9l-7 3-7-3z" fill="#b58a49"/><path d="M1 4l7 2v9l-7-3z" fill="#d3ae73"/></svg></button>
            <button title="Result"><svg viewBox="0 0 16 16"><path d="M7 0h9v8H7z" fill="#7a4bab"/><path d="M.5 6.500h7v7h-7z" fill="#dfd19c" stroke="#b58a49"/></svg></button>
            <button title="Group"><svg viewBox="0 0 16 16"><path d="M7.500 1.500h8v7h-8z" fill="#dfd19c" stroke="#b58a49"/><path d="M0 7h9v8H0z" fill="#e60f0f"/></svg></button>
            <button title="Named"><svg viewBox="0 0 16 16"><path d="M2 3h3v2H2zM2 7h3v2H2zM2 11h3v2H2z" fill="#4a80b5"/><path d="M6 3h2v10H6M10 3h4v3h-4z" fill="none" stroke="#4a80b5"/></svg></button>
            <button title="Colors"><svg viewBox="0 0 16 16"><path d="M2 3h3v3H2z" fill="#b58a49"/><path d="M6 3h3v3H6zM6 11h3v3H6z" fill="#d2605a"/><path d="M10 3h3v3h-3z" fill="#d9a53a"/><path d="M2 7h3v3H2zM10 7h3v3h-3z" fill="#365f87"/><path d="M6 7h3v3H6z" fill="#9a76bf"/></svg></button>
            <button title="Levels"><svg viewBox="0 0 16 16"><path d="M0 4l8-3 8 3-8 3zM0 7l8 3 8-3v2l-8 3-8-3zM0 11l8 3 8-3v2l-8 3-8-3z" fill="#4a80b5"/></svg></button>
            <button title="Options"><svg color="#d0a04c"><use href="#gear"/></svg></button>
            <button title="Clear"><svg viewBox="0 0 16 16"><circle cx="8" cy="8" r="6.500" fill="none" stroke="#e05a4a" stroke-width="1.800"/><path d="M3.500 3.500l9 9" stroke="#e05a4a" stroke-width="1.800"/></svg></button>
        </div>

        <div class="planes">
            <div class="plane-row">
                <button class="add"><svg viewBox="0 0 14 14"><path d="M7 0v14M0 7h14" stroke="#a9c4ba" stroke-width="4"/></svg><svg class="caret"><use href="#chev"/></svg></button>
                <button class="round">3D</button>
                <button class="round" title="More"><svg class="caret"><use href="#chev"/></svg></button>
            </div>
            <label class="plane"><b>G:</b><select><option></option></select><svg class="caret"><use href="#chev"/></svg></label>
            <label class="plane"><b>WCS:</b><select><option>Top</option></select><svg class="caret"><use href="#chev"/></svg></label>
            <label class="plane"><b>C:</b><select><option>Top</option></select><svg class="caret"><use href="#chev"/></svg></label>
            <label class="plane"><b>T:</b><select><option>Top</option></select><svg class="caret"><use href="#chev"/></svg></label>
        </div>

        <svg class="cube" viewBox="375 701 140 126">
            <path d="M410 733l5-10 29-12 12 2 8 8 18 43-4 14-24 11-12-1-13-30-12-6z" fill="#c4c4c4"/>
            <g fill="#9c9c9c"><path d="M420 724l22-10 3 4-22 10zM416 737l5 1 12 17-5 3zM444 754l21-8 2 5-21 8z"/><path d="M457 716l6 1 11 23-5-2zM433 757l7-1 2 9-6 8-5-9zM466 746l7-7 5 7-3 6-8-2zM445 784l23-9 1 4-23 9zM474 750l4 15-2 4-4-14z" fill="#aaa"/><path d="M411 731l4-7 5 2-3 8-6 7zM442 711l12 1-3 4-7-1z" fill="#8f8f8f"/></g>
            <path d="M418 733l28-14 11-2 14 26-6 4-26 8-6-3z" fill="#d1d1d1"/>
            <path d="M440 765l25-9 7 1 2 12-24 12-8-4z" fill="#dadada"/>
            <text x="435" y="743" transform="rotate(-18 435 743)">Top</text>
            <text x="448" y="777" class="front" transform="rotate(-22 448 777)">Front</text>
            <path d="M420 756l7 12M421 761l11 8" stroke="#111" stroke-width="1.500"/>
            <g fill="none" stroke-width="3"><path d="M438 798l51-28" stroke="#c40c0c"/><path d="M438 798l-25-37" stroke="#0b8a12"/><path d="M438 798l-5-30" stroke="#1414c8" stroke-width="4"/></g>
            <path d="M493 768l-9 1 4 6z" fill="#c40c0c"/><path d="M407 754l10 6-6 5z" fill="#0b8a12"/><path d="M431 764l5 8h-7z" fill="#1414c8"/>
            <text x="494" y="770" class="axis" fill="#c40c0c">X</text><text x="400" y="754" class="axis" fill="#0b8a12">Y</text><text x="427" y="767" class="axis" fill="#1414c8">Z</text>
            <g fill="#e4e4e4" stroke="#a5a5a5"><rect x="377.500" y="745.500" width="17" height="47" rx="8.500"/><circle cx="386" cy="808" r="8.500"/><rect x="401.500" y="799.500" width="47" height="17" rx="8.500"/></g>
            <path d="M386 749l4 7h-3v11h-2v-11h-3zM386 790l4-7h-3v-12h-2v12h-3zM405 808l8-4v3h11v2h-11v3zM445 808l-8-4v3h-11v2h11v3z" fill="#9a9a9a"/>
            <path d="M381 808c1-4 6-5 9-2M391 808c-1 4-6 5-9 2" fill="none" stroke="#9a9a9a" stroke-width="1.500"/><path d="M391 803v5h-5zM381 813v-5h5z" fill="#9a9a9a"/>
        </svg>

        <div class="scale"><span>88.087 mm</span></div>
    </section>
</main>

<footer class="status">
    <span class="s-section">SECTION VIEW: OFF</span>
    <span class="s-selected">SELECTED ENTITIES: 1</span>
    <span class="coord">X: <b>231.32811</b></span>
    <span class="coord">Y: <b>-141.09931</b></span>
    <button class="s-z">Z: <b>0.00000</b><svg class="caret"><use href="#chev"/></svg></button>
    <button class="s-3d">3D</button>
    <button class="s-plane">CPLANE: Top<svg class="caret"><use href="#chev"/></svg></button>
    <button class="s-plane">TPLANE: Top<svg class="caret"><use href="#chev"/></svg></button>
    <button class="s-wcs">WCS: Top<svg class="caret"><use href="#chev"/></svg></button>
    <button class="shade" title="Wireframe"><svg><use href="#globe"/></svg></button>
    <button class="shade" title="Dimmed"><svg><use href="#globe"/></svg></button>
    <button class="shade" title="No hidden"><svg viewBox="0 0 16 16"><g fill="none" stroke="#fff"><circle cx="8" cy="8" r="6.500"/><path d="M10 2c2 4 2 8 0 12M2 10h12"/></g></svg></button>
    <button class="shade on" title="Outline shaded"><svg viewBox="0 0 16 16"><circle cx="8" cy="8" r="7" fill="url(#pearl)" stroke="#fff"/></svg></button>
    <button class="shade" title="Shaded"><svg viewBox="0 0 16 16"><circle cx="8" cy="8" r="7" fill="url(#pearl)"/></svg></button>
    <button class="shade" title="Translucency"><svg viewBox="0 0 16 16"><circle cx="8" cy="8" r="7" fill="url(#pearl)"/><path d="M2 13L13 2" stroke="#2b579a" stroke-width="1.500"/><path d="M3 13L13 3a7 7 0 0 1-10 10z" fill="#888" opacity=".6"/></svg></button>
</footer>

</body>
</html>
```
FILE: styles.css
```css
* {
    box-sizing: border-box;
}

body {
    margin: 0;
    height: 100vh;
    display: flex;
    flex-direction: column;
    overflow: hidden;
    background: #fff;
    color: #444;
    font: 11px/13px "Open Sans", "Noto Sans", sans-serif;
}

button, select {
    font: inherit;
    color: inherit;
    background: none;
    border: 0;
    padding: 0;
    margin: 0;
}

button {
    display: flex;
    align-items: center;
    justify-content: center;
    white-space: nowrap;
}

a {
    color: inherit;
    text-decoration: none;
}

svg {
    display: block;
    flex: none;
    width: 16px;
    height: 16px;
    overflow: visible;
}

.sprite {
    position: absolute;
    width: 0;
    height: 0;
}

.caret {
    width: 8px;
    height: 8px;
    color: #777;
}

/* title bar and tabs */
.header {
    flex: none;
    border-bottom: 1px solid #d2d2d2;
}

.titlebar {
    display: flex;
    height: 35px;
}

.quick-access {
    flex: 0 0 514px;
    display: flex;
    align-items: center;
    padding: 0 0 7px 9px;
}

.quick-access button {
    width: 24px;
}

.quick-access .wide {
    width: 29px;
}

.quick-access .more {
    margin-left: 0;
}

.qa-sep {
    width: 1px;
    height: 21px;
    margin-left: 2px;
    background: #d2d2d2;
}

.app-title {
    flex: 0 0 244px;
    margin: 0;
    font-size: 11px;
    font-weight: normal;
    line-height: 33px;
    text-align: center;
}

.window-buttons {
    display: flex;
    margin-left: auto;
}

.window-buttons button {
    width: 36px;
    height: 33px;
}

.window-buttons svg {
    width: 11px;
    height: 11px;
}

.tabs {
    display: flex;
    align-items: flex-end;
    gap: 1px;
    height: 25px;
}

.tab {
    height: 25px;
    padding: 0 14px;
    line-height: 26px;
}

.tab.file {
    width: 57px;
    text-align: center;
    background: #2b579a;
    color: #fff;
}

.tab.active {
    height: 25px;
    margin-bottom: -1px;
    padding: 0 13px;
    border: 1px solid #d2d2d2;
    border-bottom: 0;
    background: #fff;
    color: #000;
    line-height: 23px;
}

.context {
    display: flex;
    flex-direction: column;
    height: 60px;
    text-align: center;
}

.context span {
    flex: none;
    height: 31px;
    line-height: 26px;
}

.context span:last-child {
    height: 25px;
}

.mill {
    width: 80px;
    border-top: 4px solid #d3343c;
    background: #f9f0f1;
}

.mill span:first-child {
    color: #8e2a35;
}

.surf {
    width: 121px;
    margin-left: -1px;
    border-top: 4px solid #b180c1;
    background: #f5f2f8;
}

.surf span:first-child {
    color: #6d5a78;
}

.tab-tools {
    display: flex;
    align-items: center;
    gap: 8px;
    height: 29px;
    margin-left: auto;
    padding-right: 4px;
}

.tab-tools .my {
    fill: #fff;
    font: bold 9px "Open Sans", sans-serif;
}

.tab-tools .up {
    transform: rotate(180deg);
}

.style-select {
    width: 100px;
    height: 19px;
    margin-right: -3px;
    padding: 0 1px;
    appearance: none;
    border: 1px solid #999;
    border-radius: 0;
    background: linear-gradient(45deg, transparent 50%, #777 50%) 90px 7px / 3px 3px no-repeat, linear-gradient(-45deg, transparent 50%, #777 50%) 93px 7px / 3px 3px no-repeat, #fff;
    color: #111;
}

/* ribbon */
.ribbon {
    flex: none;
    display: flex;
    height: 97px;
    border-bottom: 1px solid #c9cbce;
}

.group {
    display: flex;
    flex-direction: column;
    margin: 2px 0 3px;
    border-right: 1px solid #d2d2d2;
}

.items {
    flex: 1;
    display: flex;
    justify-content: center;
    padding-top: 2px;
}

.g-type { width: 223px; }
.g-setup { width: 223px; }
.g-sim { width: 151px; }
.g-post { width: 62px; }
.g-sheet { width: 159px; }
.g-msim { width: 129px; }
.g-atp { width: 160px; }

.g-type .items {
    padding-left: 3px;
}

.g-setup .items {
    padding-left: 2px;
}

.g-type .big {
    width: 42px;
}

.g-sim .items {
    gap: 1px;
    padding-left: 2px;
}

.big {
    flex-direction: column;
    justify-content: flex-start;
    padding: 5px 3px 0;
}

.big > svg:first-child, .g1 {
    width: 28px;
    height: 28px;
    margin-bottom: 4px;
}

.big .caret {
    margin-top: 2px;
}

.g1 {
    color: #4a80b5;
    font-size: 22px;
    line-height: 28px;
}

.stack {
    display: flex;
    flex-direction: column;
    align-items: flex-start;
    padding-left: 5px;
}

.g-atp .stack {
    padding-left: 8px;
}

.small {
    gap: 3px;
    height: 22px;
}

.group-label {
    position: relative;
    line-height: 17px;
    text-align: center;
}

.launcher {
    position: absolute;
    right: 5px;
    top: 5px;
    width: 8px;
    height: 8px;
}

.g-sim .group-label, .g-msim .group-label {
    padding-right: 14px;
}

/* toolpaths panel */
.workspace {
    flex: 1;
    display: flex;
    min-height: 0;
}

.panel {
    flex: 0 0 375px;
    min-width: 0;
    display: flex;
    flex-direction: column;
    padding-right: 8px;
}

.panel-head {
    display: flex;
    align-items: center;
    height: 35px;
    padding-left: 4px;
}

.panel-head h2 {
    flex: 1;
    margin: 0;
    padding-bottom: 2px;
    font-size: 18px;
    line-height: 28px;
    font-weight: normal;
}

.panel-head button {
    width: 19px;
}

.panel-head svg {
    width: 10px;
    height: 10px;
}

.toolrow {
    display: flex;
    align-items: center;
    height: 24px;
    padding-left: 2px;
}

.toolrow button {
    width: 22px;
    opacity: .5;
}

.toolrow .strong {
    opacity: .6;
}

.toolrow i {
    width: 1px;
    height: 20px;
    margin: 0 4px 0 3px;
    background: #ccc;
}

.toolrow > .caret {
    width: 7px;
    margin: 0 2px;
    color: #999;
}

.toolrow .ml {
    margin-left: 2px;
}

.toolrow .g1-small {
    color: #365f87;
    font-size: 12px;
}

.toolrow .boxed {
    width: 32px;
    height: 21px;
    gap: 4px;
    margin-left: 2px;
    border: 1px solid #aaa;
}

.toolrow .boxed .caret {
    width: 6px;
}

.tree {
    position: relative;
    flex: 1;
    display: flex;
    flex-direction: column;
    margin: 6px 0 0 2px;
    border: 1px solid #c8cacd;
    font: 11px/16px Roboto, "Liberation Sans", sans-serif;
    color: #111;
}

.tree ul {
    flex: 1;
    margin: 0;
    padding: 2px 0 0;
    list-style: none;
    overflow: hidden;
}

.tree li {
    display: flex;
    align-items: center;
    height: 16px;
    white-space: nowrap;
}

.tree .exp {
    width: 9px;
    height: 9px;
    margin-right: 6px;
}

.tree .ico {
    width: 16px;
    height: 16px;
    margin: 0 3px 0 1px;
}

.tree .l0 .ico {
    width: 13px;
    height: 13px;
    margin: 0 5px 0 2px;
}

.tree .l3 .ico {
    width: 15px;
    margin: 0 1px 0 0;
}

.l0 { padding-left: 8px; }
.l1 { padding-left: 27px; }
.l2 { padding-left: 46px; }
.l3 { padding-left: 79px; }

.tree .insert {
    padding-left: 60px;
}

.insert span {
    width: 163px;
    height: 15px;
    background: #d7e2f2;
}

.branches {
    position: absolute;
    left: 0;
    top: 2px;
    width: 120px;
    height: 144px;
    pointer-events: none;
}

.hscroll {
    display: flex;
    height: 17px;
    background: #ececec;
}

.hscroll button {
    width: 18px;
    border: 1px solid #d0d0d0;
    background: #fff;
}

.hscroll button svg {
    width: 8px;
    height: 8px;
}

.hscroll .thumb {
    width: 70%;
    margin-right: auto;
    border: 1px solid #d0d0d0;
    background: #fff;
}

.bottom-tabs {
    display: flex;
    height: 23px;
    margin-top: 22px;
    border-top: 1px solid #e2e2e2;
    line-height: 20px;
    color: #333;
}

.bottom-tabs a {
    padding: 0 6px;
}

.bottom-tabs .on {
    height: 22px;
    margin: -1px 2px 0 0;
    padding: 0 5px;
    border: 1px solid #aaa;
    border-top: 0;
    background: #fff;
}

/* graphics window */
.viewport {
    flex: 1;
    position: relative;
    min-width: 0;
    overflow: hidden;
    background: linear-gradient(#97a1ac, #b5bbc3 35%, #d5d8dc 60%, #eff0f2 80%, #fff);
}

.model {
    position: absolute;
    inset: 0;
    width: 100%;
    height: 100%;
}

.edges {
    fill: none;
    stroke: #06122c;
    stroke-width: 1.2;
}

.face {
    fill: #0055ac;
    stroke: #06122c;
    stroke-width: 1.2;
}

.select-bar {
    position: absolute;
    top: 6px;
    left: 50%;
    transform: translateX(-50%);
    display: flex;
    align-items: center;
    width: 476px;
    height: 34px;
    padding-left: 18px;
    border-radius: 17px;
    background: rgba(205, 212, 219, .5);
    color: #666;
}

.select-bar button {
    width: 22px;
    height: 34px;
    opacity: .65;
}

.select-bar .dim {
    opacity: .35;
}

.select-bar .auto {
    width: auto;
    gap: 2px;
    margin: 0 4px 0 3px;
    font-size: 12px;
    color: #444;
}

.select-bar i {
    width: 1px;
    height: 34px;
    background: #a3abb4;
}

.select-bar > .caret {
    width: 8px;
    margin: 0 4px;
}

.select-bar .picked {
    border: 1px solid #5e9ccf;
    background: rgba(150, 190, 225, .5);
}

.select-bar .xyz {
    fill: #333;
    font: 9px "Open Sans", sans-serif;
}

.masks {
    position: absolute;
    top: 6px;
    right: 5px;
    display: flex;
    flex-direction: column;
    gap: 6px;
}

.masks button {
    width: 35px;
    height: 35px;
    border: 1px solid rgba(150, 155, 160, .25);
    border-radius: 50%;
    background: linear-gradient(135deg, transparent 49%, rgba(120, 125, 130, .25) 49%, rgba(120, 125, 130, .25) 51%, transparent 51%), rgba(225, 228, 232, .4);
}

.masks svg {
    opacity: .45;
}

.planes {
    position: absolute;
    left: 2px;
    bottom: 139px;
    display: flex;
    flex-direction: column;
    gap: 5px;
    width: 100px;
    color: #a0a3a7;
    font-size: 12px;
}

.planes .caret {
    color: #a0a3a7;
}

.plane-row {
    display: flex;
    justify-content: space-between;
}

.plane-row button {
    height: 21px;
    border: 1px solid #c3c6ca;
    border-radius: 11px;
}

.plane-row .add {
    width: 37px;
    gap: 6px;
}

.add svg:first-child {
    width: 13px;
    height: 13px;
}

.plane-row .round {
    width: 22px;
}

.plane {
    display: flex;
    align-items: center;
    gap: 5px;
    height: 21px;
    padding: 0 5px 0 8px;
    border: 1px solid #c3c6ca;
    border-radius: 11px;
}

.plane b {
    font-weight: 600;
}

.plane select {
    flex: 1;
    min-width: 0;
    appearance: none;
}

.cube {
    position: absolute;
    left: 0;
    bottom: 0;
    width: 140px;
    height: 126px;
}

.cube text {
    font: 12px "Open Sans", sans-serif;
}

.cube .front {
    font: 600 9px "Open Sans", sans-serif;
}

.cube .axis {
    font: bold 12px "DejaVu Sans", sans-serif;
}

.scale {
    position: absolute;
    right: 22px;
    bottom: 11px;
    width: 97px;
    height: 23px;
    border: solid #000;
    border-width: 0 1px;
    background: linear-gradient(#000, #000) 0 11px / 100% 1px no-repeat;
    color: #000;
    font: bold 11px/8px "DejaVu Sans", sans-serif;
    text-align: center;
}

/* status bar */
.status {
    flex: none;
    display: flex;
    align-items: center;
    justify-content: flex-end;
    height: 23px;
    padding-top: 1px;
    background: #2b579a;
    color: #fff;
}

.status b {
    margin-left: 7px;
    font-weight: normal;
}

.status button {
    justify-content: flex-start;
}

.status .caret {
    margin-left: 8px;
    color: #fff;
    opacity: .4;
}

.s-section { width: 119px; }
.s-selected { width: 172px; }
.coord { width: 90px; }
.s-z { width: 84px; }
.s-3d { width: 28px; }
.s-plane { width: 86px; }
.s-wcs { width: 72px; }

.status .shade {
    justify-content: center;
    width: 28px;
    height: 23px;
}

.status .on {
    background: #1664c8;
}
```
